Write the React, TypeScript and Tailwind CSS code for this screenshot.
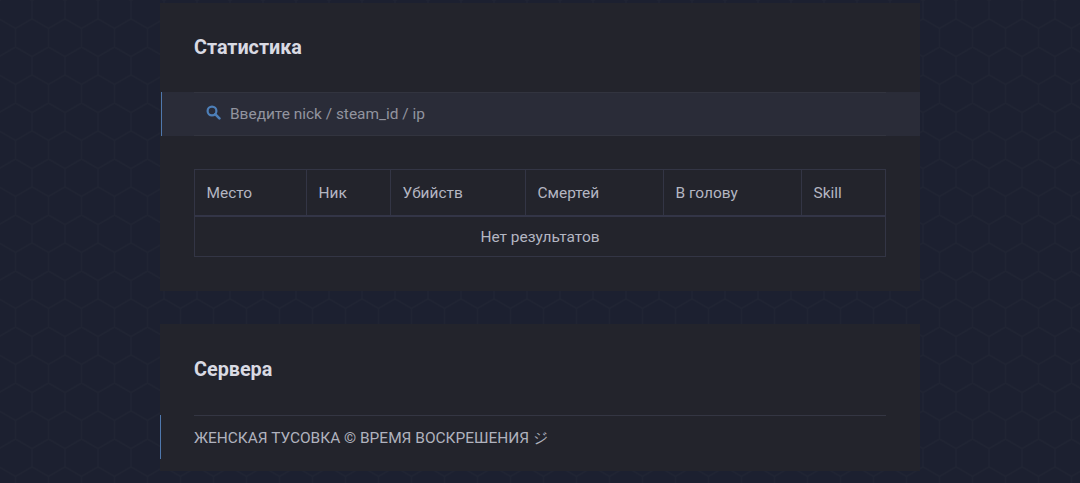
const font = { fontFamily: "Roboto, sans-serif" }

const columns = [
  { title: "Место", width: "w-[112px]" },
  { title: "Ник", width: "w-[84px]" },
  { title: "Убийств", width: "w-[135px]" },
  { title: "Смертей", width: "w-[138px]" },
  { title: "В голову", width: "w-[138px]" },
  { title: "Skill", width: "" },
]

function HexBackground() {
  return (
    <svg className="absolute inset-0 h-full w-full" xmlns="http://www.w3.org/2000/svg">
      <defs>
        <pattern id="hex" width="33" height="56" patternUnits="userSpaceOnUse" x="-1" y="-9">
          <path
            d="M16.5 0 L33 9.5 V28 L16.5 37.5 L0 28 V9.5 Z M16.5 37.5 V56"
            fill="none"
            stroke="#202433"
            strokeWidth="1.5"
          />
        </pattern>
      </defs>
      <rect width="100%" height="100%" fill="url(#hex)" />
    </svg>
  )
}

function Card({ title, className, children }: { title: string; className: string; children: React.ReactNode }) {
  return (
    <section className={`bg-[#23242c] ${className}`}>
      <h2 className="px-[34px] text-[19.8px] font-bold leading-[24px] text-[#d9dae3]">{title}</h2>
      {children}
    </section>
  )
}

export default function App() {
  return (
    <div style={font} className="relative h-[483px] w-[1080px] overflow-hidden bg-[#1c2030]">
      <HexBackground />
      <main className="relative mx-auto w-[760px] pt-[3px]">
        <Card title="Статистика" className="h-[288px] pt-[33px]">
          <div className="mt-[32px] ml-px border-l border-[#4f78ad] bg-[#2a2c38]">
            <div className="mr-[34px] ml-[32px] flex h-[44px] items-center border-y border-[#32343f] pl-[12px]">
              <svg width="15" height="15" viewBox="0 0 15 15" fill="none" className="mb-[3px] text-[#4d7fb8]">
                <circle cx="6" cy="6" r="4.4" stroke="currentColor" strokeWidth="2.2" />
                <path d="M9.2 9.2 L13.4 13.4" stroke="currentColor" strokeWidth="2.6" strokeLinecap="round" />
              </svg>
              <span className="ml-[9px] pt-[2px] text-[15.45px] text-[#92949f]">Введите nick / steam_id / ip</span>
            </div>
          </div>
          <div className="mx-[34px] mt-[33px] border border-[#333545] text-[15.45px] text-[#b4b6c2]">
            <div className="flex h-[47px] border-b-2 border-[#333547]">
              {columns.map((c, i) => (
                <div
                  key={c.title}
                  className={`flex items-center pt-[3px] pl-[11.5px] ${c.width} ${i < columns.length - 1 ? "border-r border-[#333545]" : "flex-1"}`}
                >
                  {c.title}
                </div>
              ))}
            </div>
            <div className="flex h-[39px] items-center justify-center pt-[2px]">Нет результатов</div>
          </div>
        </Card>
        <Card title="Сервера" className="mt-[33px] h-[147px] pt-[34px]">
          <div className="mt-[33px] border-l border-[#4f78ad]">
            <div className="mr-[34px] ml-[33px] flex h-[44px] items-center border-t border-[#343643] pt-[3px] text-[15.45px] text-[#b0b2be]">
              ЖЕНСКАЯ ТУСОВКА © ВРЕМЯ ВОСКРЕШЕНИЯ ジ
            </div>
          </div>
        </Card>
      </main>
    </div>
  )
}
